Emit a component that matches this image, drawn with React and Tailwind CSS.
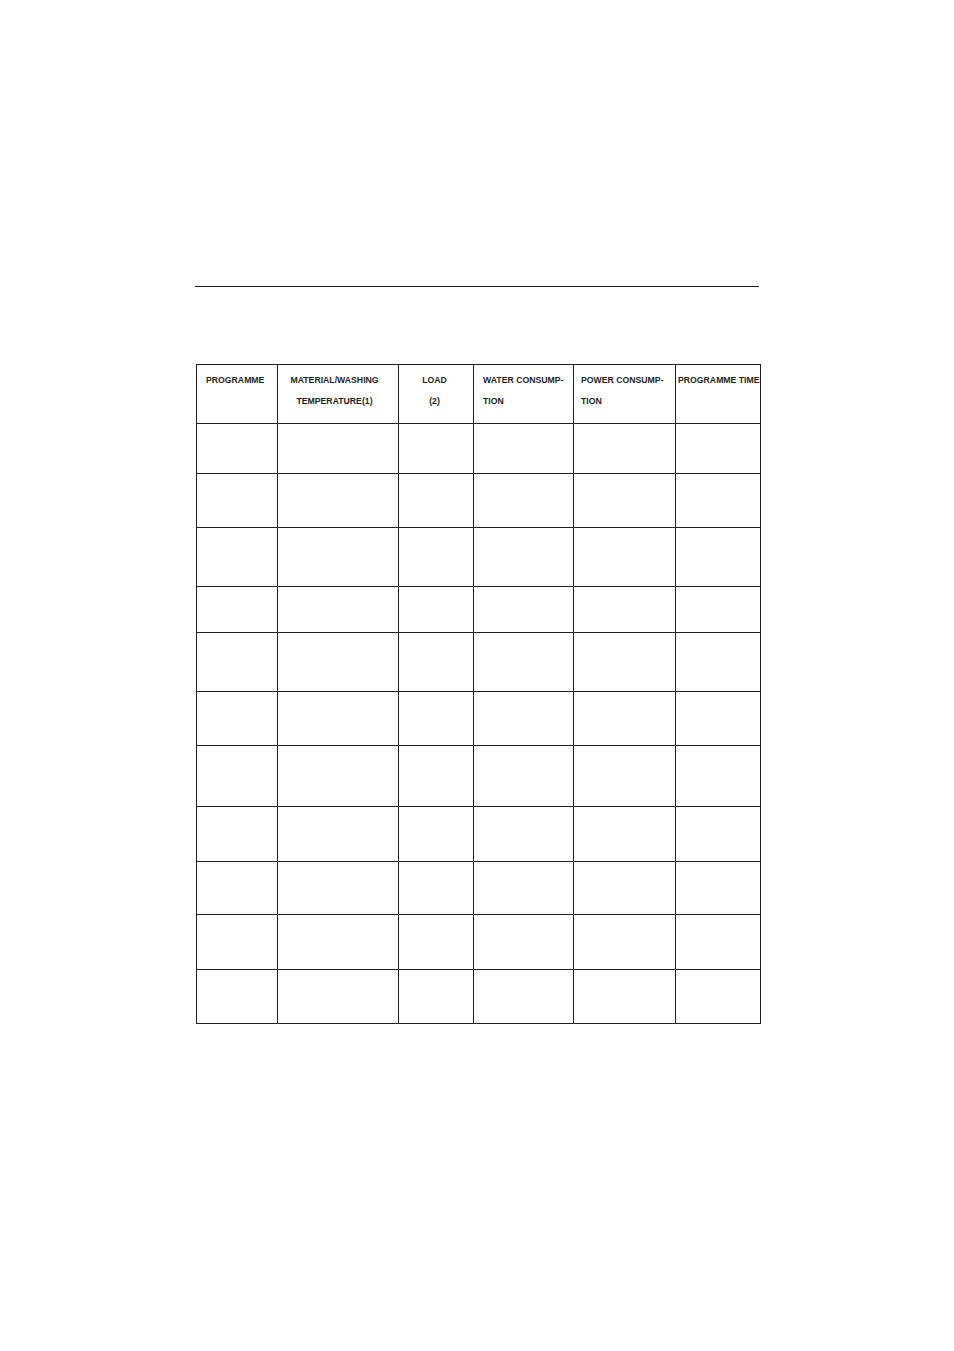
const cols = [
  { w: 'w-[81px]', head: ['PROGRAMME'], cls: 'pl-[9px] text-left' },
  { w: 'w-[121px]', head: ['MATERIAL/WASHING', 'TEMPERATURE(1)'], cls: 'text-center pr-[7px]' },
  { w: 'w-[75px]', head: ['LOAD', '(2)'], cls: 'text-center pr-[3px]' },
  { w: 'w-[100px]', head: ['WATER CONSUMP-', 'TION'], cls: 'pl-[9px] text-left' },
  { w: 'w-[102px]', head: ['POWER CONSUMP-', 'TION'], cls: 'pl-[7px] text-left' },
  { w: 'w-[85px]', head: ['PROGRAMME TIME'], cls: 'pl-[2px] text-left whitespace-nowrap' },
];

const rowHeights = ['h-[50px]', 'h-[54px]', 'h-[59px]', 'h-[46px]', 'h-[59px]', 'h-[54px]', 'h-[61px]', 'h-[55px]', 'h-[53px]', 'h-[55px]', 'h-[54px]'];

export default function App() {
  return (
    <div className="w-[954px] h-[1351px] bg-white" style={{ fontFamily: '"Liberation Sans", Arial, sans-serif' }}>
      <div className="pt-[286px] pl-[195px]">
        <div className="w-[564px] h-px bg-[#231f20]" />
      </div>
      <div className="pt-[77px] pl-[196px]">
        <table className="border-collapse table-fixed w-[565px]">
          <thead>
            <tr className="h-[59px]">
              {cols.map((c, i) => (
                <th
                  key={i}
                  className={`${c.w} ${c.cls} align-top border border-[#231f20] pt-[5px] text-[8.7px] font-bold leading-[21px] text-[#231f20] overflow-visible`}
                >
                  {c.head.map((line, j) => (
                    <div key={j}>{line}</div>
                  ))}
                </th>
              ))}
            </tr>
          </thead>
          <tbody>
            {rowHeights.map((h, r) => (
              <tr key={r} className={h}>
                {cols.map((c, i) => (
                  <td key={i} className="border border-[#231f20]" />
                ))}
              </tr>
            ))}
          </tbody>
        </table>
      </div>
    </div>
  );
}
